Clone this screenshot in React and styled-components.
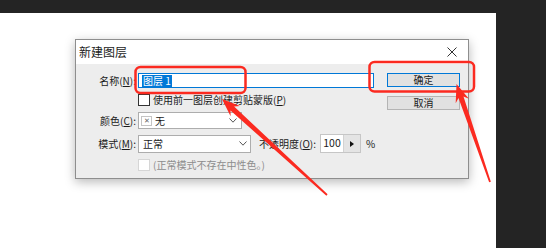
import React from 'react';
import styled, { createGlobalStyle } from 'styled-components';

const GlobalStyle = createGlobalStyle`
  html, body { margin: 0; padding: 0; background: #242424; }
  body { font-family: "Noto Sans CJK SC", "Noto Sans", sans-serif; }
`;

const Screen = styled.div`
  position: relative;
  width: 546px;
  height: 248px;
  overflow: hidden;
  background: #242424;
  padding-top: 13px;
  box-sizing: border-box;
`;

const Canvas = styled.div`
  width: 496px;
  height: 235px;
  background: #ffffff;
  padding: 26px 0 0 75px;
  box-sizing: border-box;
`;

const Dialog = styled.div`
  width: 394px;
  border: 1px solid #8e8e8e;
  box-sizing: border-box;
  box-shadow: 0 3px 10px rgba(0, 0, 0, 0.28);
  font-family: "Noto Sans CJK SC", "Noto Sans", sans-serif;
  color: #1b1b1b;
`;

const TitleBar = styled.div`
  height: 24px;
  background: #ffffff;
  display: flex;
  align-items: center;
  justify-content: space-between;
  padding: 0 11px 0 3px;
`;

const Title = styled.span`
  font-size: 12px;
  line-height: 1;
`;

const CloseIcon = styled.svg`
  width: 10px;
  height: 10px;
  display: block;
`;

const Body = styled.div`
  height: 114px;
  background: #ededed;
  display: flex;
  padding-top: 9px;
  box-sizing: border-box;
  column-gap: 13px;
`;

const Form = styled.div`
  display: grid;
  grid-template-columns: 60px 236px;
  grid-template-rows: 15px 14px 17px 19px 14px;
  column-gap: 2px;
  row-gap: 5px;
  align-items: center;
  font-size: 10px;
  line-height: 1;
`;

const Label = styled.span`
  text-align: right;
  white-space: nowrap;
  u { text-decoration: underline; text-underline-offset: 1px; }
`;

const Cell = styled.div`
  grid-column: 2;
  display: flex;
  align-items: center;
  height: 100%;
  u { text-decoration: underline; text-underline-offset: 1px; }
`;

const TextInput = styled.div`
  width: 236px;
  height: 15px;
  box-sizing: border-box;
  border: 1px solid #0078d7;
  background: #fff;
  display: flex;
  align-items: center;
  padding-left: 3px;
`;

const Selected = styled.span`
  background: #0078d7;
  color: #fff;
  padding: 1px 1px;
  white-space: pre;
`;

const CheckRow = styled.div`
  display: flex;
  align-items: center;
  gap: 3px;
  white-space: nowrap;
  color: ${p => (p.$disabled ? '#8c8c8c' : 'inherit')};
`;

const Box = styled.span`
  width: 12px;
  height: 12px;
  box-sizing: border-box;
  background: #fff;
  border: 1px solid ${p => (p.$disabled ? '#d6d6d6' : '#333')};
  flex: none;
`;

const Select = styled.div`
  width: ${p => p.$w}px;
  height: ${p => p.$h}px;
  box-sizing: border-box;
  border: 1px solid #adadad;
  background: #fff;
  display: flex;
  align-items: center;
  padding: 0 ${p => p.$pr}px 0 ${p => p.$pl}px;
  gap: 3px;
  flex: none;
`;

const SelectText = styled.span`
  flex: 1;
`;

const Swatch = styled.span`
  width: 11px;
  height: 10px;
  box-sizing: border-box;
  border: 1px solid #c4c4c4;
  display: flex;
  align-items: center;
  justify-content: center;
  font-size: 7px;
  color: #666;
  line-height: 1;
`;

const Chevron = styled.svg`
  width: 8px;
  height: 5px;
  display: block;
  flex: none;
`;

const OpacityLabel = styled.span`
  width: 58px;
  margin-left: 8px;
  white-space: nowrap;
  flex: none;
`;

const NumberBox = styled.div`
  width: 41px;
  height: 19px;
  margin-left: 3px;
  box-sizing: border-box;
  border: 1px solid #c6c6c6;
  display: flex;
  flex: none;
`;

const NumberValue = styled.span`
  width: 22px;
  background: #fff;
  display: flex;
  align-items: center;
  justify-content: center;
  font-size: 10.5px;
`;

const Stepper = styled.span`
  flex: 1;
  background: #e4e4e4;
  border-left: 1px solid #d2d2d2;
  display: flex;
  align-items: center;
  justify-content: center;
`;

const Percent = styled.span`
  margin-left: 5px;
`;

const ButtonCol = styled.div`
  width: 73px;
  display: flex;
  flex-direction: column;
  gap: 9px;
`;

const Button = styled.div`
  height: 14px;
  box-sizing: border-box;
  border: 1px solid ${p => (p.$primary ? '#0078d7' : '#b4b4b4')};
  background: #e1e1e1;
  display: flex;
  align-items: center;
  justify-content: center;
  font-size: 10px;
  line-height: 1;
`;

const Overlay = styled.svg`
  position: absolute;
  left: 0;
  top: 0;
  width: 546px;
  height: 248px;
  pointer-events: none;
`;

const ChevronDown = () => (
  <Chevron viewBox="0 0 8 5">
    <polyline points="0.5,0.5 4,4.2 7.5,0.5" fill="none" stroke="#555" strokeWidth="1" />
  </Chevron>
);

export default function App() {
  return (
    <>
      <GlobalStyle />
      <Screen>
        <Canvas>
          <Dialog>
            <TitleBar>
              <Title>新建图层</Title>
              <CloseIcon viewBox="0 0 10 10">
                <line x1="0.5" y1="0.5" x2="9.5" y2="9.5" stroke="#333" strokeWidth="1" />
                <line x1="9.5" y1="0.5" x2="0.5" y2="9.5" stroke="#333" strokeWidth="1" />
              </CloseIcon>
            </TitleBar>
            <Body>
              <Form>
                <Label>名称(<u>N</u>):</Label>
                <Cell>
                  <TextInput>
                    <Selected>图层 1</Selected>
                  </TextInput>
                </Cell>

                <Cell>
                  <CheckRow>
                    <Box />
                    <span>使用前一图层创建剪贴蒙版(<u>P</u>)</span>
                  </CheckRow>
                </Cell>

                <Label>颜色(<u>C</u>):</Label>
                <Cell>
                  <Select $w={104} $h={17} $pl={2} $pr={4}>
                    <Swatch>✕</Swatch>
                    <SelectText>无</SelectText>
                    <ChevronDown />
                  </Select>
                </Cell>

                <Label>模式(<u>M</u>):</Label>
                <Cell>
                  <Select $w={113} $h={18} $pl={4} $pr={3}>
                    <SelectText>正常</SelectText>
                    <ChevronDown />
                  </Select>
                  <OpacityLabel>不透明度(<u>O</u>):</OpacityLabel>
                  <NumberBox>
                    <NumberValue>100</NumberValue>
                    <Stepper>
                      <svg width="4" height="6" viewBox="0 0 4 6">
                        <polygon points="0,0 4,3 0,6" fill="#111" />
                      </svg>
                    </Stepper>
                  </NumberBox>
                  <Percent>%</Percent>
                </Cell>

                <Cell>
                  <CheckRow $disabled>
                    <Box $disabled />
                    <span>(正常模式不存在中性色。)</span>
                  </CheckRow>
                </Cell>
              </Form>
              <ButtonCol>
                <Button $primary>确定</Button>
                <Button>取消</Button>
              </ButtonCol>
            </Body>
          </Dialog>
        </Canvas>
        <Overlay viewBox="0 0 546 248">
          <rect x="135.5" y="67" width="110" height="26" rx="5" fill="none" stroke="#fb2a20" strokeWidth="2.5" />
          <rect x="369.5" y="62" width="104.5" height="29.5" rx="5" fill="none" stroke="#fb2a20" strokeWidth="2.5" />
          <polygon
            points="222,99 240,106 234.1,106.5 327.6,194.3 326.4,195.7 230.5,110.4 230.6,116.3"
            fill="#fb2a20"
          />
          <polygon
            points="456.5,84 468.9,98.7 463.5,96.4 490.85,181.7 489.15,182.3 458.5,98 455.7,103.3"
            fill="#fb2a20"
          />
        </Overlay>
      </Screen>
    </>
  );
}
